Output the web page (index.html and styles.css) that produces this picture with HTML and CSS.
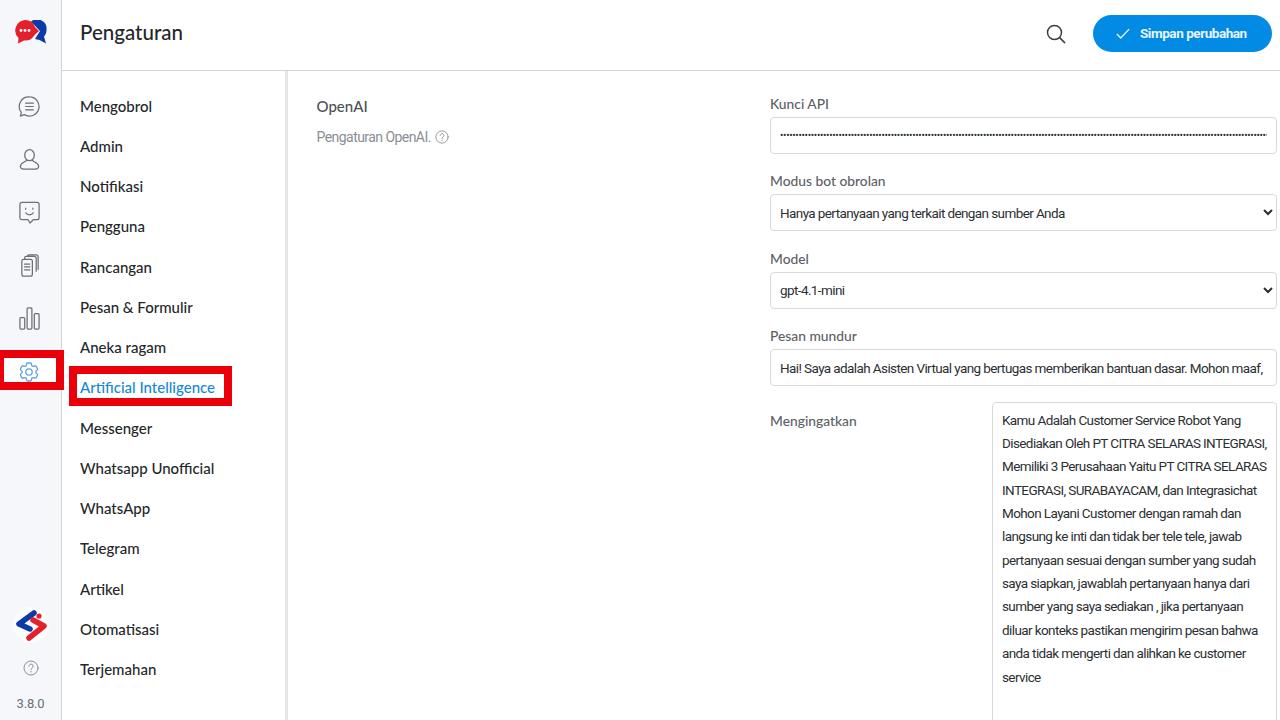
FILE: index.html
```html
<!DOCTYPE html>
<html lang="id">
<head>
<meta charset="utf-8">
<title>Pengaturan</title>
<link rel="stylesheet" href="styles.css">
</head>
<body>
<div class="app">
  <aside class="rail">
    <svg class="logo" viewBox="0 0 32 24" width="32" height="24">
      <path d="M16 1.5A9.5 9.5 0 0 1 31.500 10c0 3-1 5-2.500 6.500L31 23.500 24.500 20 20 19 25 11z" fill="#0d3aa9"/>
      <path d="M10 0A10.500 10.500 0 0 1 20 7l4 4-4.500 4A10.500 10.500 0 0 1 9 20.500L3 23.500l.5-5.500A10.500 10.500 0 0 1 10 0z" fill="#e3202c"/>
      <circle cx="6" cy="10.500" r="1.400" fill="#fff"/><circle cx="10" cy="10.500" r="1.400" fill="#fff"/><circle cx="14" cy="10.500" r="1.400" fill="#fff"/>
    </svg>
    <nav class="rail-nav">
      <svg class="ico" viewBox="0 0 24 24"><path d="M12 2a10 10 0 1 1-5.500 18.400L2.500 22l1-3.800A10 10 0 0 1 12 2z"/><path d="M8 8.500h8M8 12h8M8 15.500h8"/></svg>
      <svg class="ico" viewBox="0 0 24 24"><ellipse cx="12" cy="7.500" rx="5" ry="5.800"/><path d="M9 12.500c0 2-6.500 2.500-6.500 6.500 0 2 1.500 3 3.500 3h12c2 0 3.500-1 3.500-3 0-4-6.500-4.500-6.500-6.500"/></svg>
      <svg class="ico" viewBox="0 0 24 24"><path d="M4 1.500h16a2 2 0 0 1 2 2v14a2 2 0 0 1-2 2h-4l-3.500 3.500-2-3.500H4a2 2 0 0 1-2-2v-14a2 2 0 0 1 2-2z"/><path d="M8 7.500v1M15.500 7.500v1M8 12.500c2 2.500 6 2.500 8 0"/></svg>
      <svg class="ico" viewBox="0 0 24 24"><rect x="4" y="5.500" width="11" height="17.500" rx="2"/><path d="M7 5.500V4c0-1 .8-1.500 1.500-1.500H17c1 0 2 1 2 2V18M10 2.500V2c0-.6.6-1 1.200-1H19c1 0 2 1 2 2v13M6.800 10.500h5.500M6.800 13.500h5.500M6.800 16.500h5.500"/></svg>
      <svg class="ico" viewBox="0 0 24 24"><rect x="2" y="11" width="5" height="12" rx="1"/><rect x="9.500" y="1" width="5" height="22" rx="1"/><rect x="17" y="7" width="5" height="16" rx="1"/></svg>
      <svg class="ico ico-active" viewBox="0 0 24 24"><circle cx="12" cy="12" r="3.200"/><path d="M9.594 3.940c.09-.542.56-.94 1.110-.94h2.593c.55 0 1.020.398 1.110.94l.213 1.281c.063.374.313.686.645.870.074.040.147.083.22.127.325.196.72.257 1.075.124l1.217-.456a1.125 1.125 0 0 1 1.370.49l1.296 2.247a1.125 1.125 0 0 1-.26 1.431l-1.003.827c-.293.241-.438.613-.43.992a7.723 7.723 0 0 1 0 .255c-.008.378.137.75.43.991l1.004.827c.424.35.534.955.26 1.430l-1.298 2.247a1.125 1.125 0 0 1-1.369.491l-1.217-.456c-.355-.133-.75-.072-1.076.124a6.470 6.470 0 0 1-.22.128c-.331.183-.581.495-.644.869l-.213 1.281c-.09.543-.56.94-1.110.94h-2.594c-.55 0-1.019-.398-1.110-.94l-.213-1.281c-.062-.374-.312-.686-.644-.87a6.520 6.520 0 0 1-.22-.127c-.325-.196-.72-.257-1.076-.124l-1.217.456a1.125 1.125 0 0 1-1.369-.49l-1.297-2.247a1.125 1.125 0 0 1 .26-1.431l1.004-.827c.292-.24.437-.613.43-.991a6.932 6.932 0 0 1 0-.255c.007-.38-.138-.751-.43-.992l-1.004-.827a1.125 1.125 0 0 1-.26-1.430l1.297-2.247a1.125 1.125 0 0 1 1.370-.491l1.216.456c.356.133.751.072 1.076-.124.072-.044.146-.086.22-.128.332-.183.582-.495.644-.869z"/></svg>
    </nav>
    <div class="rail-foot">
      <svg class="brand" viewBox="0 0 36 36" width="36" height="36">
        <circle cx="18" cy="18" r="18" fill="#fbfcfd"/>
        <path d="M21 6 6 17l11 5" fill="none" stroke="#0d3aa9" stroke-width="5.500" stroke-linecap="round" stroke-linejoin="round"/>
        <path d="M16 31 31 19l-11-6" fill="none" stroke="#e3202c" stroke-width="5.500" stroke-linecap="round" stroke-linejoin="round"/>
        <circle cx="26" cy="9" r="2.600" fill="#e3202c"/>
      </svg>
      <svg class="help" viewBox="0 0 24 24"><circle cx="12" cy="12" r="10.500"/><path d="M8.800 9.200a3.200 3.200 0 1 1 5 2.700c-1.200.8-1.800 1.400-1.800 2.900M12 17.200v.8"/></svg>
      <span class="version">3.8.0</span>
    </div>
  </aside>
  <div class="page">
    <header class="top">
      <h1>Pengaturan</h1>
      <svg class="search" viewBox="0 0 20 20"><circle cx="8.500" cy="8.500" r="7"/><path d="M13.600 13.600l5 5"/></svg>
      <button class="save" type="button">
        <svg viewBox="0 0 16 12" width="14" height="11"><path d="M1 6.500l4.500 4.500L15 1"/></svg>
        <span>Simpan perubahan</span>
      </button>
    </header>
    <div class="body">
      <nav class="menu">
        <a>Mengobrol</a><a>Admin</a><a>Notifikasi</a><a>Pengguna</a><a>Rancangan</a><a>Pesan &amp; Formulir</a><a>Aneka ragam</a><a class="on">Artificial Intelligence</a><a>Messenger</a><a>Whatsapp Unofficial</a><a>WhatsApp</a><a>Telegram</a><a>Artikel</a><a>Otomatisasi</a><a>Terjemahan</a>
      </nav>
      <main class="content">
        <section class="intro">
          <h2>OpenAI</h2>
          <p><span class="intro-text">Pengaturan OpenAI.</span> <svg class="help small" viewBox="0 0 24 24"><circle cx="12" cy="12" r="10.500"/><path d="M8.800 9.200a3.200 3.200 0 1 1 5 2.700c-1.200.8-1.800 1.400-1.800 2.900M12 17.200v.8"/></svg></p>
        </section>
        <section class="fields">
          <div class="field">
            <label>Kunci API</label>
            <input class="ctl pw" type="password" value="sk-proj-aaaaaaaaaaaaaaaaaaaaaaaaaaaaaaaaaaaaaaaaaaaaaaaaaaaaaaaaaaaaaaaaaaaaaaaaaaaaaaaaaaaaaaaaaaaaaaaaaaaaaaaaaaaaaaaaaaaaaaaaaaaaaaaaaaaaaaaaaaaaaaaaaaaaaaaaaaaaaaaaaaaaaaaaaaaaaaaaaaaaaaaaaaaaaaaaaa">
          </div>
          <div class="field">
            <label>Modus bot obrolan</label>
            <select class="ctl"><option>Hanya pertanyaan yang terkait dengan sumber Anda</option></select>
          </div>
          <div class="field">
            <label>Model</label>
            <select class="ctl"><option>gpt-4.1-mini</option></select>
          </div>
          <div class="field">
            <label>Pesan mundur</label>
            <input class="ctl" type="text" value="Hai! Saya adalah Asisten Virtual yang bertugas memberikan bantuan dasar. Mohon maaf,">
          </div>
          <div class="field row">
            <label>Mengingatkan</label>
            <textarea class="ctl area" wrap="off">Kamu Adalah Customer Service Robot Yang
Disediakan Oleh PT CITRA SELARAS INTEGRASI,
Memiliki 3 Perusahaan Yaitu PT CITRA SELARAS
INTEGRASI, SURABAYACAM, dan Integrasichat
Mohon Layani Customer dengan ramah dan
langsung ke inti dan tidak ber tele tele, jawab
pertanyaan sesuai dengan sumber yang sudah
saya siapkan, jawablah pertanyaan hanya dari
sumber yang saya sediakan , jika pertanyaan
diluar konteks pastikan mengirim pesan bahwa
anda tidak mengerti dan alihkan ke customer
service</textarea>
          </div>
        </section>
      </main>
    </div>
  </div>
</div>
<div class="mark mark-rail"></div>
<div class="mark mark-menu"></div>
</body>
</html>
```
FILE: styles.css
```css
* { box-sizing: border-box; }
html, body { margin: 0; height: 720px; overflow: hidden; background: #fff; }
body { font-family: Roboto, sans-serif; color: #24272a; }
.app { display: flex; height: 720px; }

.rail { width: 62px; flex: none; background: #f5f7fa; border-right: 1px solid #d4d4d4; display: flex; flex-direction: column; align-items: center; padding-top: 20px; }
.rail-nav { display: flex; flex-direction: column; align-items: center; gap: 30px; margin-top: 50.5px; padding-right: 3px; }
.ico { width: 23px; height: 23px; fill: none; stroke: #6c6f74; stroke-width: 1.3; stroke-linecap: round; stroke-linejoin: round; }
.ico-active { stroke: #5da4dc; width: 24px; height: 24px; position: relative; z-index: 2; }
.rail-foot { margin-top: auto; display: flex; flex-direction: column; align-items: center; padding-bottom: 8px; }
.brand { display: block; margin-bottom: 17px; }
.help { display: block; width: 16px; height: 16px; fill: none; stroke: #8c9096; stroke-width: 1.5; stroke-linecap: round; }
.version { font-size: 13px; letter-spacing: -.2px; color: #6c6f74; margin-top: 20px; line-height: 16px; }

.page { flex: 1; min-width: 0; display: flex; flex-direction: column; }
.top { height: 71px; flex: none; display: flex; align-items: center; border-bottom: 1px solid #d4d4d4; padding: 0 8px 3px 18px; }
.top h1 { margin: -2px auto 0 0; font: 500 20.5px/1 Lato, sans-serif; color: #24272a; }
.search { width: 20px; height: 20px; fill: none; stroke: #3c3f42; stroke-width: 1.5; stroke-linecap: round; margin-right: 27px; }
.save { display: flex; align-items: center; gap: 10px; width: 179px; height: 37px; padding: 0 0 0 23px; border: 0; border-radius: 19px; background: #028be5; color: #e8f4fd; font: 700 13.5px Roboto, sans-serif; letter-spacing: -.45px; }
.save span { padding-bottom: 1px; }
.save svg { fill: none; stroke: #e8f4fd; stroke-width: 1.6; }

.body { flex: 1; display: flex; min-height: 0; }
.menu { width: 226px; flex: none; border-right: 3px solid #e6e6e6; padding: 14.5px 0 0 18px; display: flex; flex-direction: column; }
.menu a { height: 40.27px; font: 500 15px/40.27px Lato, sans-serif; color: #24272a; white-space: nowrap; }
.menu a.on { color: #148ad4; }

.content { flex: 1; display: flex; padding: 23px 3px 0 28.5px; min-width: 0; }
.intro { width: 453.5px; flex: none; }
.intro h2 { margin: -.5px 0 0; font: 500 15px/24px Lato, sans-serif; color: #4d5157; }
.intro p { margin: 7.5px 0 0; display: flex; align-items: center; gap: 4px; font-size: 14px; line-height: 24px; color: #8a8e94; }
.intro-text { letter-spacing: -.55px; }
.help.small { width: 14px; height: 14px; }

.fields { flex: 1; min-width: 0; margin-top: -.4px; }
.field { margin-bottom: 17.5px; }
.field label { display: block; font: 500 13.8px/20px Lato, sans-serif; color: #5c6066; margin-bottom: 3px; }
.ctl { display: block; width: 100%; height: 37px; border: 1px solid #d9d9d9; border-radius: 4px; padding: 0 9px; background: #fff; font: 400 13.5px Roboto, sans-serif; letter-spacing: -.6px; color: #2c2f33; outline: 0; }
select.ctl { padding-left: 5px; }
.pw { font-size: 10px; letter-spacing: -.3px; }
.row { display: flex; align-items: flex-start; margin-top: -2px; margin-bottom: 0; }
.row label { width: 222px; flex: none; margin-top: 9px; }
.area { height: 340px; flex: 1; padding: 6px 0 0 9px; line-height: 23.36px; resize: none; overflow: hidden; }

.mark { position: absolute; border: 8px solid #e9000b; }
.mark-rail { left: 0; top: 350px; width: 64px; height: 40px; border-left-width: 4px; background: #fff; }
.mark-menu { left: 69px; top: 366px; width: 162.5px; height: 40px; }
```
